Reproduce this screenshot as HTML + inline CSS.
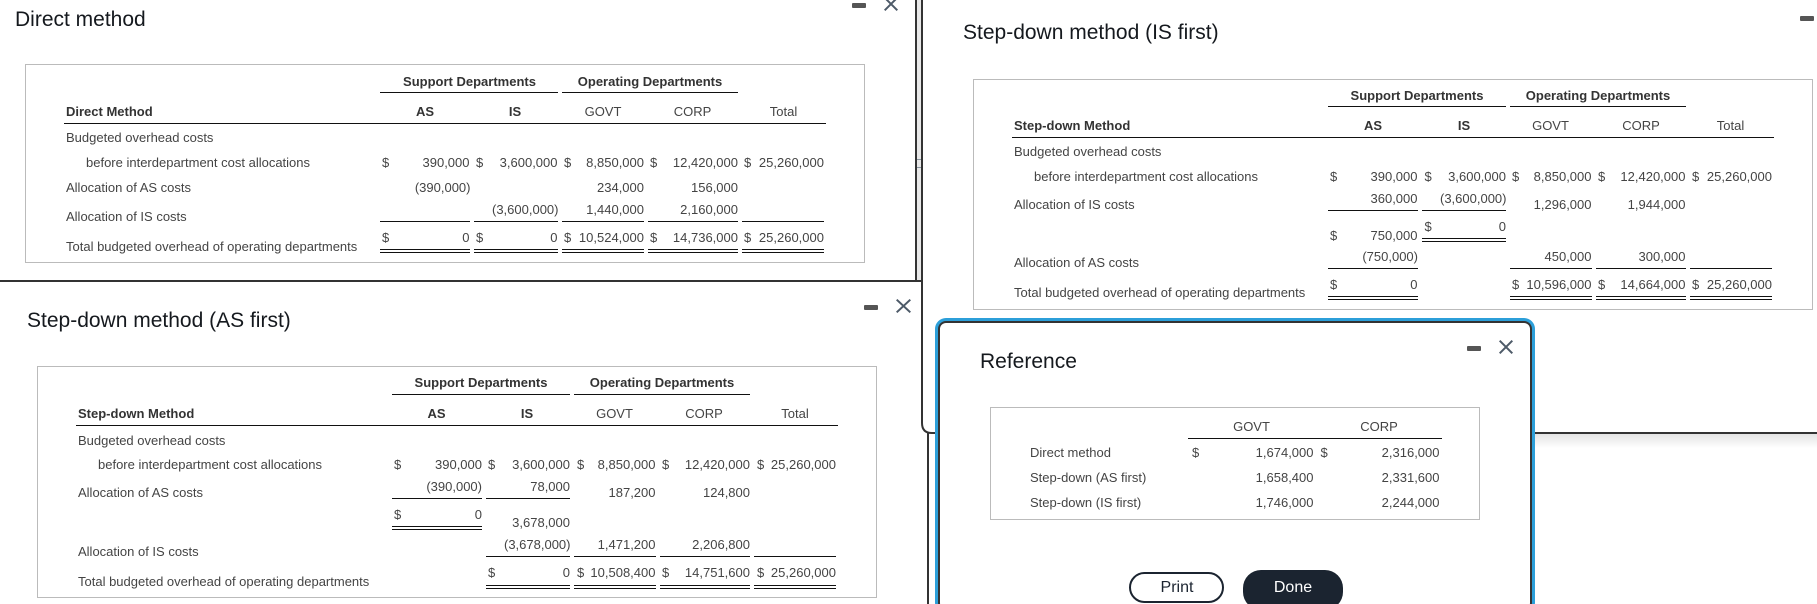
<!DOCTYPE html>
<html><head><meta charset="utf-8"><title>Overhead allocation methods</title>
<style>
html{margin:0;padding:0;background:#fff;overflow:hidden;width:1817px;height:604px}
body{margin:0;padding:0;background:#fff;position:relative;width:1817px;height:604px;overflow:hidden;font-family:"Liberation Sans",Arial,sans-serif;color:#444;font-size:13px}
span,b,u,div,h2{position:absolute;display:block}
span,b{line-height:16px;white-space:nowrap;font-weight:400}
b{font-weight:700;font-size:13px;color:#333}
.r,.c{display:flex;width:0;justify-content:flex-end}
.c{justify-content:center}
u{height:1px;background:#111}
.box{border:1px solid #bbb;box-sizing:border-box;background:#fff}
h2{margin:0;font-weight:400;font-size:21px;line-height:26px;color:#15191e;white-space:nowrap}
svg{position:absolute;display:block}
</style></head><body>

<svg style="left:0;top:0" width="1817" height="604">
<rect x="917" y="0" width="4" height="281" fill="#e8e8e8"/>
<rect x="917" y="159" width="4" height="1" fill="#8a96a0"/><rect x="917" y="167" width="4" height="1" fill="#8a96a0"/>
<rect x="915" y="0" width="2" height="281" fill="#333"/>
<rect x="0" y="280" width="923" height="2" fill="#333"/>
<path d="M922 0V423Q922 433 932 433H1817" fill="none" stroke="#333" stroke-width="2"/>
<rect x="927" y="433" width="2" height="171" fill="#333"/>
</svg>
<div style="left:1535px;top:434px;width:282px;height:14px;background:linear-gradient(#e4e4e4,#fff)"></div>

<!-- Panel 1 -->
<h2 style="left:15px;top:7px">Direct method</h2>
<svg style="left:852px;top:3px" width="14" height="5"><rect width="14" height="5" rx="1" fill="#555"/></svg>
<svg style="left:884px;top:-3px" width="14" height="14"><path d="M0.7 0.7L13.3 13.3M13.3 0.7L0.7 13.3" stroke="#4d5a68" stroke-width="2" fill="none"/></svg>
<div class="box" style="left:25px;top:64px;width:840px;height:199px"></div>
<b class="c" style="left:469.5px;top:74px">Support Departments</b><b class="c" style="left:650px;top:74px">Operating Departments</b>
<u style="left:380px;top:92px;width:178px"></u><u style="left:562px;top:92px;width:176px"></u>
<b style="left:66px;top:104px">Direct Method</b>
<b class="c" style="left:425px;top:104px">AS</b><b class="c" style="left:515px;top:104px">IS</b>
<span class="c" style="left:603px;top:104px">GOVT</span><span class="c" style="left:692.5px;top:104px">CORP</span><span class="c" style="left:783.5px;top:104px">Total</span>
<u style="left:64px;top:123px;width:762px"></u>
<span style="left:66px;top:130px">Budgeted overhead costs</span>
<span style="left:86px;top:155px">before interdepartment cost allocations</span>
<span style="left:382px;top:155px">$</span><span class="r" style="left:469.5px;top:155px">390,000</span><span style="left:476px;top:155px">$</span><span class="r" style="left:557.5px;top:155px">3,600,000</span><span style="left:564px;top:155px">$</span><span class="r" style="left:644px;top:155px">8,850,000</span><span style="left:650px;top:155px">$</span><span class="r" style="left:738px;top:155px">12,420,000</span><span style="left:744px;top:155px">$</span><span class="r" style="left:824px;top:155px">25,260,000</span>
<span style="left:66px;top:180px">Allocation of AS costs</span>
<span class="r" style="left:470.5px;top:180px">(390,000)</span><span class="r" style="left:644px;top:180px">234,000</span><span class="r" style="left:738px;top:180px">156,000</span>
<span style="left:66px;top:209px">Allocation of IS costs</span>
<span class="r" style="left:558.5px;top:202px">(3,600,000)</span><span class="r" style="left:644px;top:202px">1,440,000</span><span class="r" style="left:738px;top:202px">2,160,000</span>
<u style="left:380px;top:221px;width:90px"></u><u style="left:474px;top:221px;width:84px"></u><u style="left:562px;top:221px;width:82px"></u><u style="left:648px;top:221px;width:90px"></u><u style="left:742px;top:221px;width:82px"></u>
<span style="left:66px;top:239px">Total budgeted overhead of operating departments</span>
<span style="left:382px;top:230px">$</span><span class="r" style="left:469.5px;top:230px">0</span><span style="left:476px;top:230px">$</span><span class="r" style="left:557.5px;top:230px">0</span><span style="left:564px;top:230px">$</span><span class="r" style="left:644px;top:230px">10,524,000</span><span style="left:650px;top:230px">$</span><span class="r" style="left:738px;top:230px">14,736,000</span><span style="left:744px;top:230px">$</span><span class="r" style="left:824px;top:230px">25,260,000</span>
<u style="left:380px;top:249px;width:90px"></u><u style="left:474px;top:249px;width:84px"></u><u style="left:562px;top:249px;width:82px"></u><u style="left:648px;top:249px;width:90px"></u><u style="left:742px;top:249px;width:82px"></u>
<u style="left:380px;top:252px;width:90px"></u><u style="left:474px;top:252px;width:84px"></u><u style="left:562px;top:252px;width:82px"></u><u style="left:648px;top:252px;width:90px"></u><u style="left:742px;top:252px;width:82px"></u>

<!-- Panel 2 -->
<h2 style="left:27px;top:308px">Step-down method (AS first)</h2>
<svg style="left:864px;top:305px" width="14" height="5"><rect width="14" height="5" rx="1" fill="#555"/></svg>
<svg style="left:896px;top:299px" width="15" height="14"><path d="M0.7 0.7L14.3 13.3M14.3 0.7L0.7 13.3" stroke="#4d5a68" stroke-width="2" fill="none"/></svg>
<div class="box" style="left:37px;top:366px;width:840px;height:232px"></div>
<b class="c" style="left:481px;top:375px">Support Departments</b><b class="c" style="left:662px;top:375px">Operating Departments</b>
<u style="left:392px;top:394px;width:178px"></u><u style="left:574px;top:394px;width:176px"></u>
<b style="left:78px;top:406px">Step-down Method</b>
<b class="c" style="left:436.5px;top:406px">AS</b><b class="c" style="left:527px;top:406px">IS</b>
<span class="c" style="left:614.5px;top:406px">GOVT</span><span class="c" style="left:704px;top:406px">CORP</span><span class="c" style="left:795px;top:406px">Total</span>
<u style="left:76px;top:425px;width:762px"></u>
<span style="left:78px;top:433px">Budgeted overhead costs</span>
<span style="left:98px;top:457px">before interdepartment cost allocations</span>
<span style="left:394px;top:457px">$</span><span class="r" style="left:482px;top:457px">390,000</span><span style="left:488px;top:457px">$</span><span class="r" style="left:570px;top:457px">3,600,000</span><span style="left:577px;top:457px">$</span><span class="r" style="left:655.5px;top:457px">8,850,000</span><span style="left:662px;top:457px">$</span><span class="r" style="left:750px;top:457px">12,420,000</span><span style="left:757px;top:457px">$</span><span class="r" style="left:836px;top:457px">25,260,000</span>
<span style="left:78px;top:485px">Allocation of AS costs</span>
<span class="r" style="left:482px;top:479px">(390,000)</span><span class="r" style="left:570px;top:479px">78,000</span><span class="r" style="left:655.5px;top:485px">187,200</span><span class="r" style="left:750px;top:485px">124,800</span>
<u style="left:392px;top:498px;width:90px"></u><u style="left:486px;top:498px;width:84px"></u>
<span style="left:394px;top:507px">$</span><span class="r" style="left:482px;top:507px">0</span>
<u style="left:392px;top:526px;width:90px"></u><u style="left:392px;top:529px;width:90px"></u>
<span class="r" style="left:570px;top:515px">3,678,000</span>
<span class="r" style="left:570.5px;top:537px">(3,678,000)</span><span class="r" style="left:655.5px;top:537px">1,471,200</span><span class="r" style="left:750px;top:537px">2,206,800</span>
<span style="left:78px;top:544px">Allocation of IS costs</span>
<u style="left:486px;top:556px;width:84px"></u><u style="left:574px;top:556px;width:82px"></u><u style="left:660px;top:556px;width:90px"></u><u style="left:754px;top:556px;width:82px"></u>
<span style="left:78px;top:574px">Total budgeted overhead of operating departments</span>
<span style="left:488px;top:565px">$</span><span class="r" style="left:570px;top:565px">0</span><span style="left:577px;top:565px">$</span><span class="r" style="left:655.5px;top:565px">10,508,400</span><span style="left:662px;top:565px">$</span><span class="r" style="left:750px;top:565px">14,751,600</span><span style="left:757px;top:565px">$</span><span class="r" style="left:836px;top:565px">25,260,000</span>
<u style="left:486px;top:585px;width:84px"></u><u style="left:574px;top:585px;width:82px"></u><u style="left:660px;top:585px;width:90px"></u><u style="left:754px;top:585px;width:82px"></u>
<u style="left:486px;top:588px;width:84px"></u><u style="left:574px;top:588px;width:82px"></u><u style="left:660px;top:588px;width:90px"></u><u style="left:754px;top:588px;width:82px"></u>

<!-- Panel 3 -->
<h2 style="left:963px;top:20px">Step-down method (IS first)</h2>
<svg style="left:1800px;top:16px" width="14" height="5"><rect width="14" height="5" rx="1" fill="#555"/></svg>
<div class="box" style="left:973px;top:79px;width:840px;height:231px"></div>
<b class="c" style="left:1417px;top:88px">Support Departments</b><b class="c" style="left:1598px;top:88px">Operating Departments</b>
<u style="left:1328px;top:106px;width:178px"></u><u style="left:1510px;top:106px;width:176px"></u>
<b style="left:1014px;top:118px">Step-down Method</b>
<b class="c" style="left:1373px;top:118px">AS</b><b class="c" style="left:1464px;top:118px">IS</b>
<span class="c" style="left:1550.5px;top:118px">GOVT</span><span class="c" style="left:1641px;top:118px">CORP</span><span class="c" style="left:1730.5px;top:118px">Total</span>
<u style="left:1012px;top:137px;width:762px"></u>
<span style="left:1014px;top:144px">Budgeted overhead costs</span>
<span style="left:1034px;top:169px">before interdepartment cost allocations</span>
<span style="left:1330px;top:169px">$</span><span class="r" style="left:1417.5px;top:169px">390,000</span><span style="left:1424.5px;top:169px">$</span><span class="r" style="left:1506px;top:169px">3,600,000</span><span style="left:1512px;top:169px">$</span><span class="r" style="left:1591.5px;top:169px">8,850,000</span><span style="left:1598px;top:169px">$</span><span class="r" style="left:1685.5px;top:169px">12,420,000</span><span style="left:1692px;top:169px">$</span><span class="r" style="left:1772px;top:169px">25,260,000</span>
<span style="left:1014px;top:197px">Allocation of IS costs</span>
<span class="r" style="left:1417.5px;top:191px">360,000</span><span class="r" style="left:1506.5px;top:191px">(3,600,000)</span><span class="r" style="left:1591.5px;top:197px">1,296,000</span><span class="r" style="left:1685.5px;top:197px">1,944,000</span>
<u style="left:1328px;top:210px;width:90px"></u><u style="left:1422px;top:210px;width:84px"></u>
<span style="left:1424.5px;top:219px">$</span><span class="r" style="left:1506px;top:219px">0</span>
<u style="left:1422px;top:238px;width:84px"></u><u style="left:1422px;top:241px;width:84px"></u>
<span style="left:1330px;top:228px">$</span><span class="r" style="left:1417.5px;top:228px">750,000</span>
<span class="r" style="left:1418px;top:249px">(750,000)</span><span class="r" style="left:1591.5px;top:249px">450,000</span><span class="r" style="left:1685.5px;top:249px">300,000</span>
<span style="left:1014px;top:255px">Allocation of AS costs</span>
<u style="left:1328px;top:268px;width:90px"></u><u style="left:1510px;top:268px;width:82px"></u><u style="left:1596px;top:268px;width:90px"></u><u style="left:1690px;top:268px;width:82px"></u>
<span style="left:1014px;top:285px">Total budgeted overhead of operating departments</span>
<span style="left:1330px;top:277px">$</span><span class="r" style="left:1417.5px;top:277px">0</span><span style="left:1512px;top:277px">$</span><span class="r" style="left:1591.5px;top:277px">10,596,000</span><span style="left:1598px;top:277px">$</span><span class="r" style="left:1685.5px;top:277px">14,664,000</span><span style="left:1692px;top:277px">$</span><span class="r" style="left:1772px;top:277px">25,260,000</span>
<u style="left:1328px;top:296px;width:90px"></u><u style="left:1510px;top:296px;width:82px"></u><u style="left:1596px;top:296px;width:90px"></u><u style="left:1690px;top:296px;width:82px"></u>
<u style="left:1328px;top:299px;width:90px"></u><u style="left:1510px;top:299px;width:82px"></u><u style="left:1596px;top:299px;width:90px"></u><u style="left:1690px;top:299px;width:82px"></u>

<!-- Dialog -->
<div style="left:938px;top:321px;width:594px;height:290px;box-sizing:border-box;border:2px solid #333;border-radius:8px;box-shadow:0 0 0 3px #2c9fd9;background:#fff"></div>
<h2 style="left:980px;top:349px">Reference</h2>
<svg style="left:1467px;top:346px" width="14" height="5"><rect width="14" height="5" rx="1" fill="#555"/></svg>
<svg style="left:1499px;top:340px" width="14" height="14"><path d="M0.7 0.7L13.3 13.3M13.3 0.7L0.7 13.3" stroke="#4d5a68" stroke-width="2" fill="none"/></svg>
<div class="box" style="left:990px;top:407px;width:490px;height:113px"></div>
<span class="c" style="left:1251.5px;top:419px">GOVT</span><span class="c" style="left:1379px;top:419px">CORP</span>
<u style="left:1188px;top:438px;width:254px"></u>
<span style="left:1030px;top:445px">Direct method</span><span style="left:1192px;top:445px">$</span><span class="r" style="left:1313.5px;top:445px">1,674,000</span><span style="left:1320.5px;top:445px">$</span><span class="r" style="left:1439.5px;top:445px">2,316,000</span>
<span style="left:1030px;top:470px">Step-down (AS first)</span><span class="r" style="left:1313.5px;top:470px">1,658,400</span><span class="r" style="left:1439.5px;top:470px">2,331,600</span>
<span style="left:1030px;top:495px">Step-down (IS first)</span><span class="r" style="left:1313.5px;top:495px">1,746,000</span><span class="r" style="left:1439.5px;top:495px">2,244,000</span>
<div style="left:1129px;top:572px;width:95px;height:31px;box-sizing:border-box;border:2px solid #1b2430;border-radius:16px;background:#fff"></div>
<span class="c" style="left:1177px;top:580px;font-size:16px;color:#1b2430">Print</span>
<div style="left:1243px;top:570px;width:100px;height:40px;border-radius:18px;background:#1b2430"></div>
<span class="c" style="left:1293px;top:580px;font-size:16px;color:#fff">Done</span>
</body></html>
